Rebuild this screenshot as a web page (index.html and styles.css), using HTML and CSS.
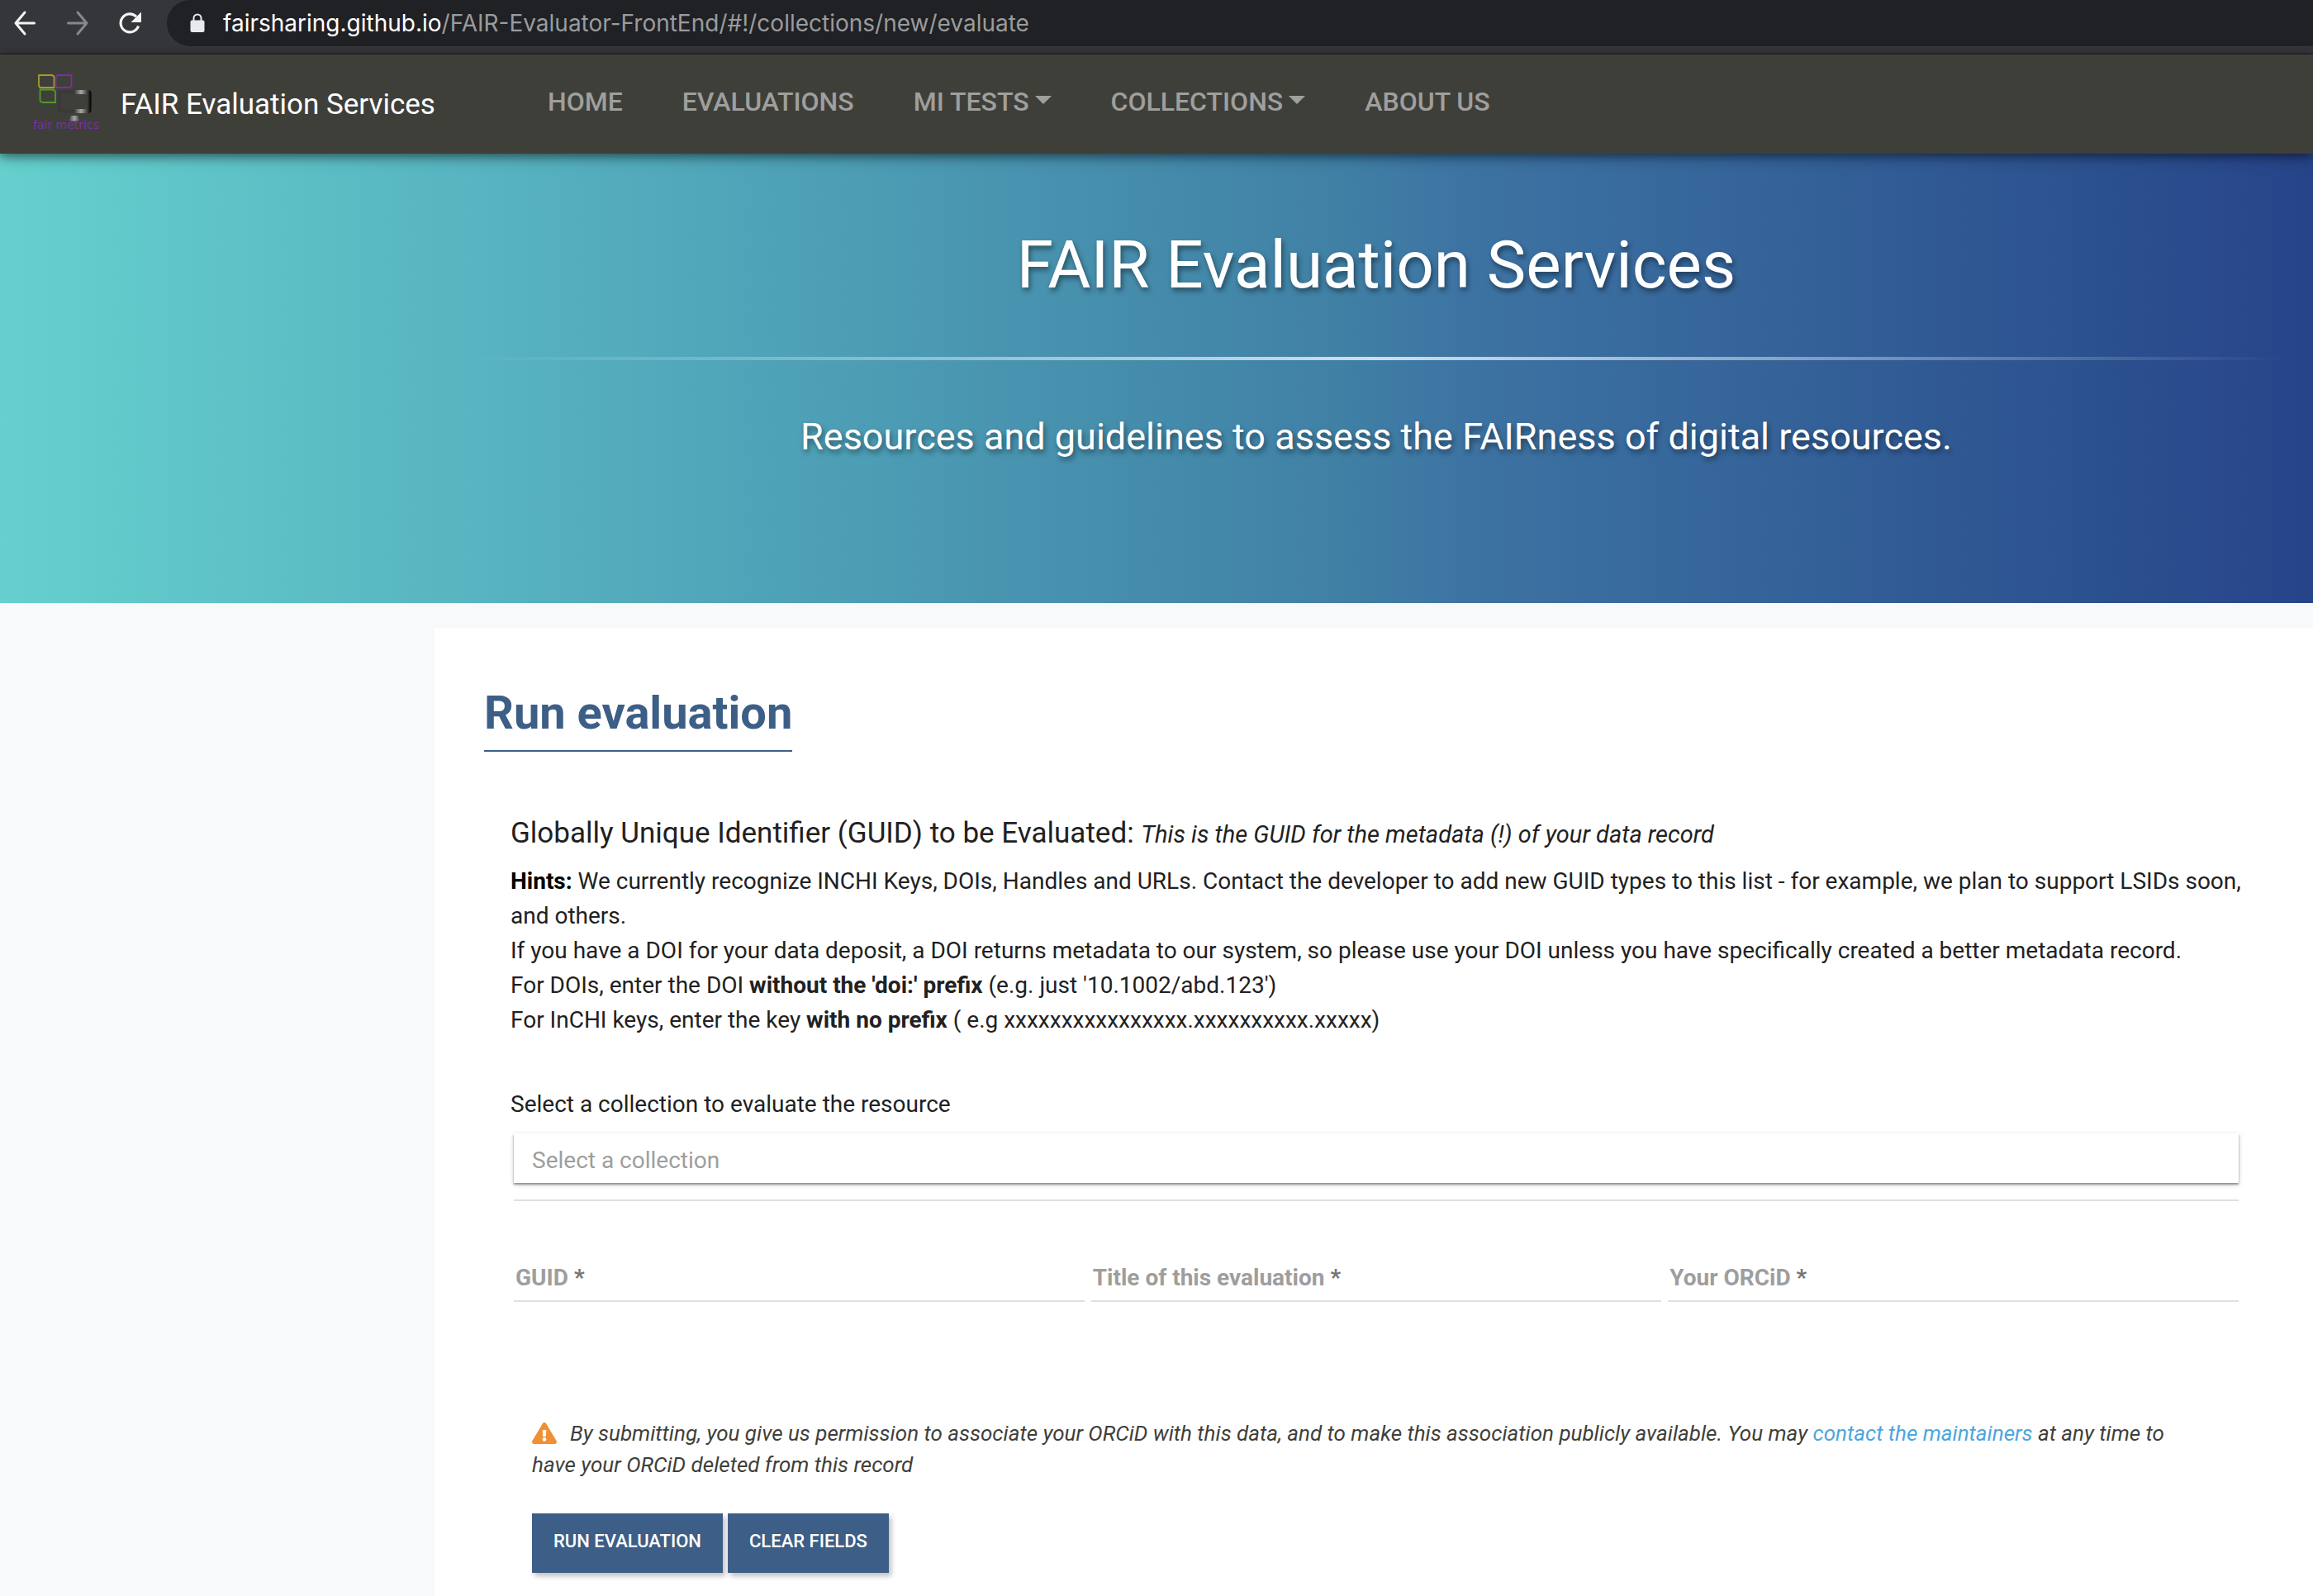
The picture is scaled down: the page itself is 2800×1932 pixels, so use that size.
FILE: index.html
```html
<!DOCTYPE html>
<html lang="en">
<head>
<meta charset="utf-8">
<title>FAIR Evaluation Services</title>
<link rel="stylesheet" href="styles.css">
</head>
<body>
<div class="browser-bar">
  <button class="browser-btn" type="button" aria-label="Back">
    <svg width="26" height="32" viewBox="0 0 26 32" fill="none" stroke="#f1f3f4" stroke-width="3" stroke-linecap="round" stroke-linejoin="round"><path d="M24.500 16H2M13 3L2 16L13 29" /></svg>
  </button>
  <button class="browser-btn" type="button" aria-label="Forward">
    <svg width="26" height="32" viewBox="0 0 26 32" fill="none" stroke="#87888b" stroke-width="3" stroke-linecap="round" stroke-linejoin="round"><path d="M1.500 16H24M13 3L24 16L13 29" /></svg>
  </button>
  <button class="browser-btn" type="button" aria-label="Reload">
    <svg width="28" height="28" viewBox="0 0 28 28"><path d="M23.500 17.500A11 11 0 1 1 21 6.200" fill="none" stroke="#f1f3f4" stroke-width="3.200"/><path d="M27 0.500V13H14.500Z" fill="#f1f3f4"/></svg>
  </button>
  <div class="address">
    <svg width="18" height="24" viewBox="0 0 18 24"><path d="M4.500 9V6a4.500 4.500 0 0 1 9 0v3" fill="none" stroke="#e8eaed" stroke-width="2"/><rect x="0.500" y="8.500" width="17" height="14.500" rx="2" fill="#e8eaed"/></svg>
    <span class="url"><span class="host">fairsharing.github.io</span>/FAIR-Evaluator-FrontEnd/#!/collections/new/evaluate</span>
  </div>
</div>

<header class="navbar">
  <a class="brand" href="#">
    <svg class="logo" width="84" height="70" viewBox="0 0 84 70">
      <defs>
        <linearGradient id="shine"><stop offset="0" stop-color="#3c3c3c"/><stop offset=".5" stop-color="#a8a8a8"/><stop offset="1" stop-color="#3a3a3a"/></linearGradient>
        <linearGradient id="edge"><stop offset="0" stop-color="#3a3a3a"/><stop offset=".7" stop-color="#0c0c0c"/><stop offset="1" stop-color="#262626"/></linearGradient>
      </defs>
      <g fill="none" stroke-width="1.800">
        <path d="M7 2H22Q25.500 2 25.500 5.500V17H10Q7 17 7 14Z" stroke="#a89a2c"/>
        <path d="M31 2H46.500V13Q46.500 17 42.500 17H27.500V5.500Q27.500 2 31 2Z" stroke="#7c2da6"/>
        <path d="M8.500 19.500H23Q27 19.500 27 23V35H12Q8.500 35 8.500 31.500Z" stroke="#4f9a2c"/>
      </g>
      <path d="M34 22.500H66M34 45.500H66M32 21V47" stroke="#393939" stroke-width="4" fill="none"/>
      <rect x="50" y="20" width="16" height="5" fill="url(#shine)"/>
      <rect x="50" y="43" width="16" height="5" fill="url(#shine)"/>
      <path d="M66 20H68Q71 21 71 25V43Q71 47 68 48H66Z" fill="url(#edge)"/>
      <path d="M46 51H54L57 57.500H43Z" fill="url(#shine)"/>
      <text x="0" y="67" class="logo-text">fair metrics</text>
    </svg>
    <span>FAIR Evaluation Services</span>
  </a>
  <nav class="menu">
    <a href="#">HOME</a>
    <a href="#">EVALUATIONS</a>
    <a class="dropdown" href="#">MI TESTS</a>
    <a class="dropdown" href="#">COLLECTIONS</a>
    <a href="#">ABOUT US</a>
  </nav>
</header>

<section class="hero">
  <h1>FAIR Evaluation Services</h1>
  <hr>
  <p>Resources and guidelines to assess the FAIRness of digital resources.</p>
</section>

<main class="panel">
  <h2>Run evaluation</h2>
  <form class="form">
    <h3>Globally Unique Identifier (GUID) to be Evaluated: <em>This is the GUID for the metadata (!) of your data record</em></h3>
    <p class="hints"><b class="hint-title">Hints:</b> We currently recognize INCHI Keys, DOIs, Handles and URLs. Contact the developer to add new GUID types to this list - for example, we plan to support LSIDs soon, and others.<br>
      If you have a DOI for your data deposit, a DOI returns metadata to our system, so please use your DOI unless you have specifically created a better metadata record.<br>
      For DOIs, enter the DOI <b>without the 'doi:' prefix</b> (e.g. just '10.1002/abd.123')<br>
      For InCHI keys, enter the key <b>with no prefix</b> ( e.g xxxxxxxxxxxxxxxx.xxxxxxxxxx.xxxxx)</p>
    <label class="select-label" for="collection">Select a collection to evaluate the resource</label>
    <div class="select-wrap"><input id="collection" type="text" placeholder="Select a collection"></div>
    <div class="fields">
      <div class="field"><input id="guid" type="text"><label for="guid">GUID <span>*</span></label></div>
      <div class="field"><input id="title" type="text"><label for="title">Title of this evaluation <span>*</span></label></div>
      <div class="field"><input id="orcid" type="text"><label for="orcid">Your ORCiD <span>*</span></label></div>
    </div>
    <div class="submit">
      <p class="notice"><svg width="30" height="26" viewBox="0 0 576 512" preserveAspectRatio="none"><path fill="#f09035" d="M569.500 440C588 472 564.800 512 527.900 512H48.100c-36.900 0-60-40.100-41.600-72L246.400 24c18.500-32 64.700-32 83.200 0l239.900 416zM288 354c-25.400 0-46 20.600-46 46s20.600 46 46 46 46-20.600 46-46-20.600-46-46-46zm-43.700-165.300l7.400 136c.4 6.400 5.600 11.300 12 11.300h48.500c6.400 0 11.600-5 12-11.300l7.400-136c.4-6.900-5.100-12.700-12-12.700h-63.400c-6.900 0-12.400 5.800-12 12.700z"/></svg>By submitting, you give us permission to associate your ORCiD with this data, and to make this association publicly available. You may <a href="#">contact the maintainers</a> at any time to have your ORCiD deleted from this record</p>
      <div class="actions">
        <button type="button">RUN EVALUATION</button>
        <button type="button">CLEAR FIELDS</button>
      </div>
    </div>
  </form>
</main>
</body>
</html>
```
FILE: styles.css
```css
* { box-sizing: border-box; }

body {
  margin: 0;
  min-height: 100vh;
  display: flex;
  flex-direction: column;
  background: #f8f9fb;
  color: #212121;
  font-family: Roboto, "Liberation Sans", sans-serif;
  font-size: 28px;
  line-height: 42px;
}

h1, h2, h3, p { margin: 0; font-weight: 400; }
a { text-decoration: none; }

/* Browser toolbar */
.browser-bar {
  display: flex;
  align-items: flex-start;
  height: 66px;
  padding-left: 16px;
  background: #35363a;
  border-bottom: 2px solid #28292a;
}
.browser-btn {
  display: flex;
  align-items: center;
  justify-content: center;
  width: 28px;
  height: 56px;
  margin-right: 36px;
  padding: 0;
  border: 0;
  background: none;
}
.browser-btn:nth-child(3) { margin-right: 30px; }
.address {
  flex: 1;
  display: flex;
  align-items: center;
  gap: 22px;
  height: 56px;
  padding-left: 28px;
  border-radius: 28px 0 0 28px;
  background: #202124;
}
.url { color: #9a9b9d; font-family: Inter, sans-serif; font-size: 28px; }
.host { color: #fff; }

/* Site navigation */
.navbar {
  position: relative;
  display: flex;
  align-items: center;
  gap: 136px;
  height: 120px;
  padding-left: 40px;
  background: #3f3f3a;
  box-shadow: 0 4px 10px rgba(0, 0, 0, .4), 0 4px 20px rgba(0, 0, 0, .2);
}
.brand { display: flex; align-items: center; gap: 22px; color: #fff; font-size: 35px; }
.brand span { padding-top: 2px; }
.logo { margin-bottom: 4px; }
.logo-text { fill: #7c2da6; font-family: "DejaVu Sans", sans-serif; font-size: 14px; }
.menu { display: flex; gap: 72px; padding-bottom: 6px; }
.menu a { color: #9f9f9d; font-size: 32px; font-weight: 500; }
.dropdown::after {
  content: "";
  display: inline-block;
  margin-left: 7px;
  vertical-align: 8px;
  border: 10px solid transparent;
  border-top-color: currentColor;
  border-bottom: 0;
}

/* Banner */
.hero {
  padding: 87px 54px 174px 586px;
  background: linear-gradient(to right, #65d0ce 0%, #4fa3b8 33%, #4080a5 58%, #3d74a3 63%, #2b4f8e 92%, #27448a 100%);
  color: #fff;
  text-align: center;
  text-shadow: 2px 4px 6px rgba(0, 0, 0, .45);
}
.hero h1 { font-size: 80px; line-height: 96px; }
.hero hr {
  height: 4px;
  margin: 63px -20px 66px;
  border: 0;
  background: linear-gradient(to right, rgba(255, 255, 255, 0), rgba(255, 255, 255, .75), rgba(255, 255, 255, 0));
}
.hero p { font-size: 45px; line-height: 54px; }

/* Evaluation form */
.panel {
  flex: 1;
  margin: 30px 0 0 526px;
  padding: 69px 82px 28px 60px;
  background: #fff;
}
.panel h2 {
  width: fit-content;
  padding-bottom: 11px;
  border-bottom: 2px solid #3d5e86;
  color: #3d5e86;
  font-size: 56px;
  font-weight: 700;
  line-height: 68px;
}
.form { padding: 78px 0 0 32px; }
.form h3 { font-size: 35px; }
.form h3 em { font-size: 29px; }
.hints { margin: 15px 0 60px; }
.hint-title { color: #000; }
.select-label { display: block; }
.select-wrap {
  margin: 14px 8px 0 4px;
  padding-bottom: 20px;
  border-bottom: 2px solid #e0e0e0;
}
.select-wrap input {
  display: block;
  width: 100%;
  height: 60px;
  padding: 4px 22px 0;
  border: 0;
  background: #fff;
  box-shadow: 0 2px 2px rgba(0, 0, 0, .35), 0 2px 6px rgba(0, 0, 0, .2);
  font: inherit;
}
.select-wrap input::placeholder { color: #9e9e9e; opacity: 1; }
.fields {
  display: grid;
  grid-template-columns: repeat(3, 1fr);
  gap: 8px;
  margin: 60px 8px 0 4px;
}
.field { display: grid; height: 62px; border-bottom: 2px solid #e0e0e0; }
.field > * { grid-area: 1 / 1; }
.field input { min-width: 0; border: 0; background: none; font: inherit; }
.field label { padding: 12px 2px 0; color: #9e9e9e; font-weight: 700; }
.field label span { color: #757575; }
.submit { margin: 140px 60px 0 26px; }
.notice { color: #3f3f3a; font-size: 26px; font-style: italic; line-height: 38px; }
.notice svg { margin-right: 16px; vertical-align: -4px; }
.notice a { color: #4ba6dd; }
.actions { display: flex; gap: 6px; margin-top: 40px; }
.actions button {
  height: 72px;
  padding: 0 26px 4px;
  border: 0;
  background: #3d5e86;
  box-shadow: 3px 4px 6px rgba(0, 0, 0, .25);
  color: #fff;
  font: 500 22px/32px Roboto, sans-serif;
}
```
